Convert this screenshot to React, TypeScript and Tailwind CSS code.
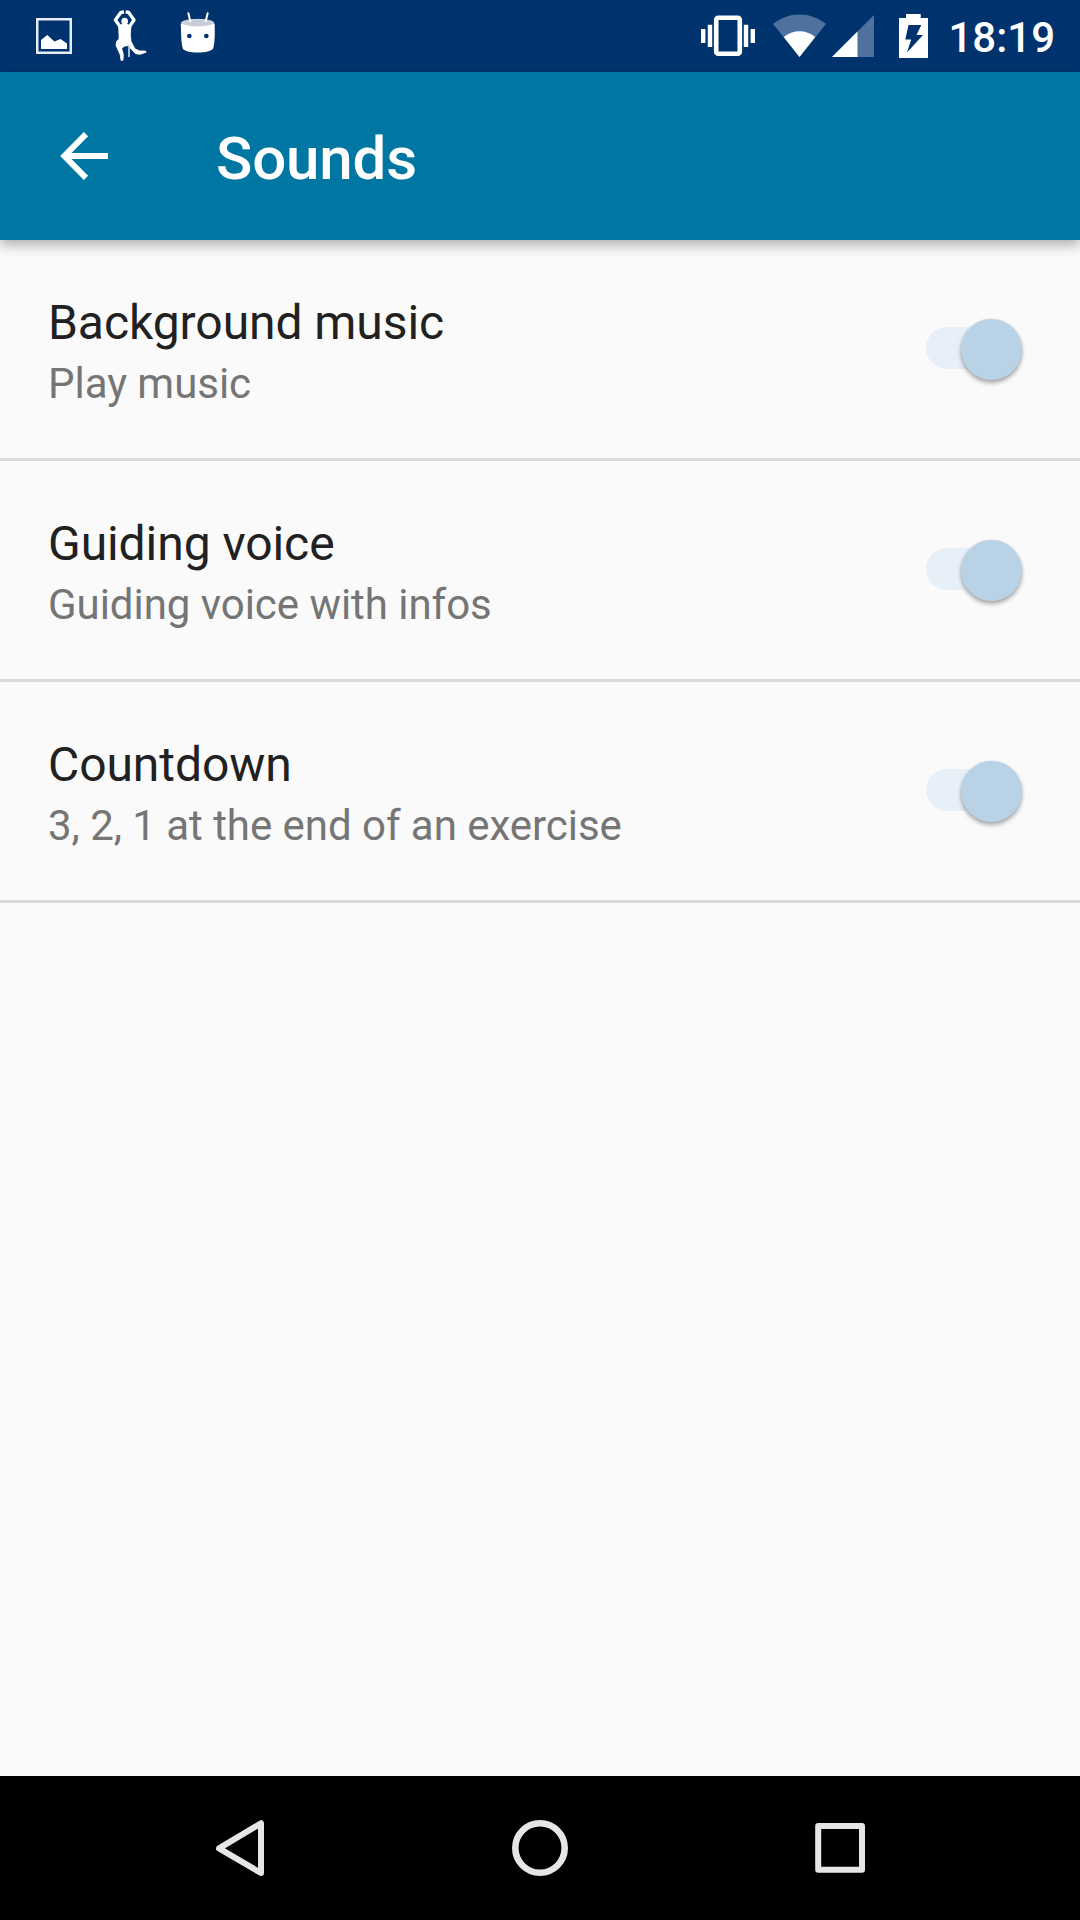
import React, { useState } from 'react';

const SETTINGS = [
  { id: 'music', title: 'Background music', summary: 'Play music' },
  { id: 'voice', title: 'Guiding voice', summary: 'Guiding voice with infos' },
  { id: 'countdown', title: 'Countdown', summary: '3, 2, 1 at the end of an exercise' },
];

function StatusBar() {
  return (
    <div className="h-[72px] bg-[#00336e] flex items-center justify-between pl-9 pr-[25px] text-white">
      <div className="flex items-center">
        {/* screenshot notification */}
        <svg width="36" height="72" viewBox="0 0 36 72">
          <rect x="1.25" y="19.25" width="33.5" height="33.5" fill="none" stroke="#e4edf8" strokeWidth="2.5" />
          <path d="M5 49V40L11.3 35L18.5 41.5L24.5 39L31 43.5V49Z" fill="#fff" />
        </svg>
        {/* workout notification */}
        <svg className="ml-10" width="35" height="72" viewBox="0 0 105 216" fill="#fff">
          <path d="M36 36L27 37L10 60L26 82M41 36L50 37L66 60L51 82" fill="none" stroke="#fff" strokeWidth="10" strokeLinejoin="round" />
          <ellipse cx="38" cy="64" rx="10" ry="11" />
          <path d="M20 78L33 72H43L57 78L55 104L57 124L69 147L84 153L101 153L102 157L84 163L71 161L58 148L50 137L38 138L29 145L34 164L33 181H27L25 165L12 136L14 124L21 117L21 104Z" stroke="#fff" strokeWidth="2.5" strokeLinejoin="round" />
          <path d="M51 136V171" stroke="#c9d6e6" strokeWidth="5" />
        </svg>
        {/* android head */}
        <svg className="ml-[33px]" width="36" height="72" viewBox="0 0 108 216">
          <path d="M2 71C4 90 2 118 8 145C13 162 93 162 100 145C106 118 104 90 104 71Z" fill="#fff" />
          <ellipse cx="53" cy="69" rx="49" ry="11" fill="#c8ccd6" stroke="#fff" strokeWidth="2" />
          <path d="M25 40L31 64M83 40L77 64" stroke="#fff" strokeWidth="6" strokeLinecap="round" />
          <circle cx="28" cy="108" r="7" fill="#00336e" />
          <circle cx="79" cy="108" r="7" fill="#00336e" />
        </svg>
      </div>

      <div className="flex items-center">
        {/* vibrate */}
        <svg width="54" height="72" viewBox="0 0 54 72" fill="#fff">
          <rect x="15.2" y="17.8" width="23.6" height="36" rx="2" fill="none" stroke="#fff" strokeWidth="4.6" />
          <path d="M0 29h4.4v14H0zM6.8 24.7h4.4V47H6.8zM42.8 24.7h4.4V47h-4.4zM49.6 29H54v14h-4.4z" />
        </svg>
        {/* wifi */}
        <svg className="ml-[18px]" width="53" height="72" viewBox="0 0 53 72">
          <path d="M26.5 57L0 24C15.5 11.2 37.5 11.2 53 24Z" fill="#4f719d" />
          <path d="M26.5 57L10.7 37C20 29.2 33 29.2 42.3 37Z" fill="#fff" />
        </svg>
        {/* signal */}
        <svg className="ml-[5.5px]" width="42.5" height="72" viewBox="0 0 42.5 72">
          <path d="M0 57L42.5 14.5V57Z" fill="#4f719d" />
          <path d="M0 57L25.5 31.5V57Z" fill="#fff" />
        </svg>
        {/* battery */}
        <svg className="ml-[25px]" width="29" height="72" viewBox="0 0 29 72">
          <path d="M0 18H7V14H21.7V18H29V58H0Z" fill="#fff" />
          <path d="M9.5 25H22.3L17.5 35H24L8 52.5L12.2 39.5H6.3Z" fill="#00336e" />
        </svg>
        <span className="ml-[20px] pt-0.5 text-[42px] leading-[49px] font-medium">18:19</span>
      </div>
    </div>
  );
}

function Toggle({ on, onToggle }: { on: boolean; onToggle: () => void }) {
  return (
    <button type="button" onClick={onToggle} className="relative w-24 h-[61px] flex items-center">
      <span className="w-[84px] h-[42px] mb-0.5 rounded-full bg-[#e7f0f8]" />
      <span
        className={
          on
            ? 'absolute top-0 right-[0.5px] size-[61px] rounded-full bg-[#bad2e6] shadow-[0_3px_4px_rgba(0,0,0,0.32),0_0_3px_rgba(0,0,0,0.08)]'
            : 'absolute top-0 left-0 size-[61px] rounded-full bg-[#f1f1f1] shadow-[0_3px_4px_rgba(0,0,0,0.32),0_0_3px_rgba(0,0,0,0.08)]'
        }
      />
    </button>
  );
}

function NavBar() {
  return (
    <div className="h-36 bg-black px-[90px] grid grid-cols-3 items-center justify-items-center">
      <svg width="72" height="72" viewBox="0 0 72 72" fill="none" stroke="#e6e6e6" strokeWidth="6" strokeLinejoin="round">
        <path d="M15 36.4L57 11.2V61Z" />
      </svg>
      <svg width="72" height="72" viewBox="0 0 72 72" fill="none" stroke="#e6e6e6" strokeWidth="6.6">
        <circle cx="36" cy="36" r="24.7" />
      </svg>
      <svg width="72" height="72" viewBox="0 0 72 72" fill="none" stroke="#e6e6e6" strokeWidth="6" strokeLinejoin="round">
        <rect x="14.2" y="14" width="43.8" height="43.8" />
      </svg>
    </div>
  );
}

export default function App() {
  const [enabled, setEnabled] = useState<Record<string, boolean>>({ music: true, voice: true, countdown: true });

  return (
    <div className="w-[1080px] h-[1920px] flex flex-col bg-[#fafafa] font-['Roboto',sans-serif]">
      <StatusBar />

      <header className="h-[168px] bg-[#0077a3] flex items-center pl-[60px] text-white shadow-[0_5px_12px_rgba(0,0,0,0.3)]">
        <svg width="48" height="48" viewBox="0 0 48 48" fill="none" stroke="#fff" strokeWidth="6">
          <path d="M48 24H5M26 2.2L4.4 24L26 45.8" />
        </svg>
        <h1 className="ml-[108px] pt-1.5 text-[60px] leading-[70px] tracking-[-0.15px] font-medium">Sounds</h1>
      </header>

      <main className="flex-1">
        {SETTINGS.map((s) => (
          <div key={s.id} className="h-[221px] border-b-[3px] border-[#dadada] pl-12 pr-[58px] flex items-center justify-between">
            <div className="pt-2">
              <h2 className="text-[48px] leading-[60px] tracking-[-0.07px] text-[#212121]">{s.title}</h2>
              <p className="pt-px text-[42px] leading-[60px] tracking-[-0.04px] text-[#757575]">{s.summary}</p>
            </div>
            <Toggle
              on={enabled[s.id]}
              onToggle={() => setEnabled({ ...enabled, [s.id]: !enabled[s.id] })}
            />
          </div>
        ))}
      </main>

      <NavBar />
    </div>
  );
}
